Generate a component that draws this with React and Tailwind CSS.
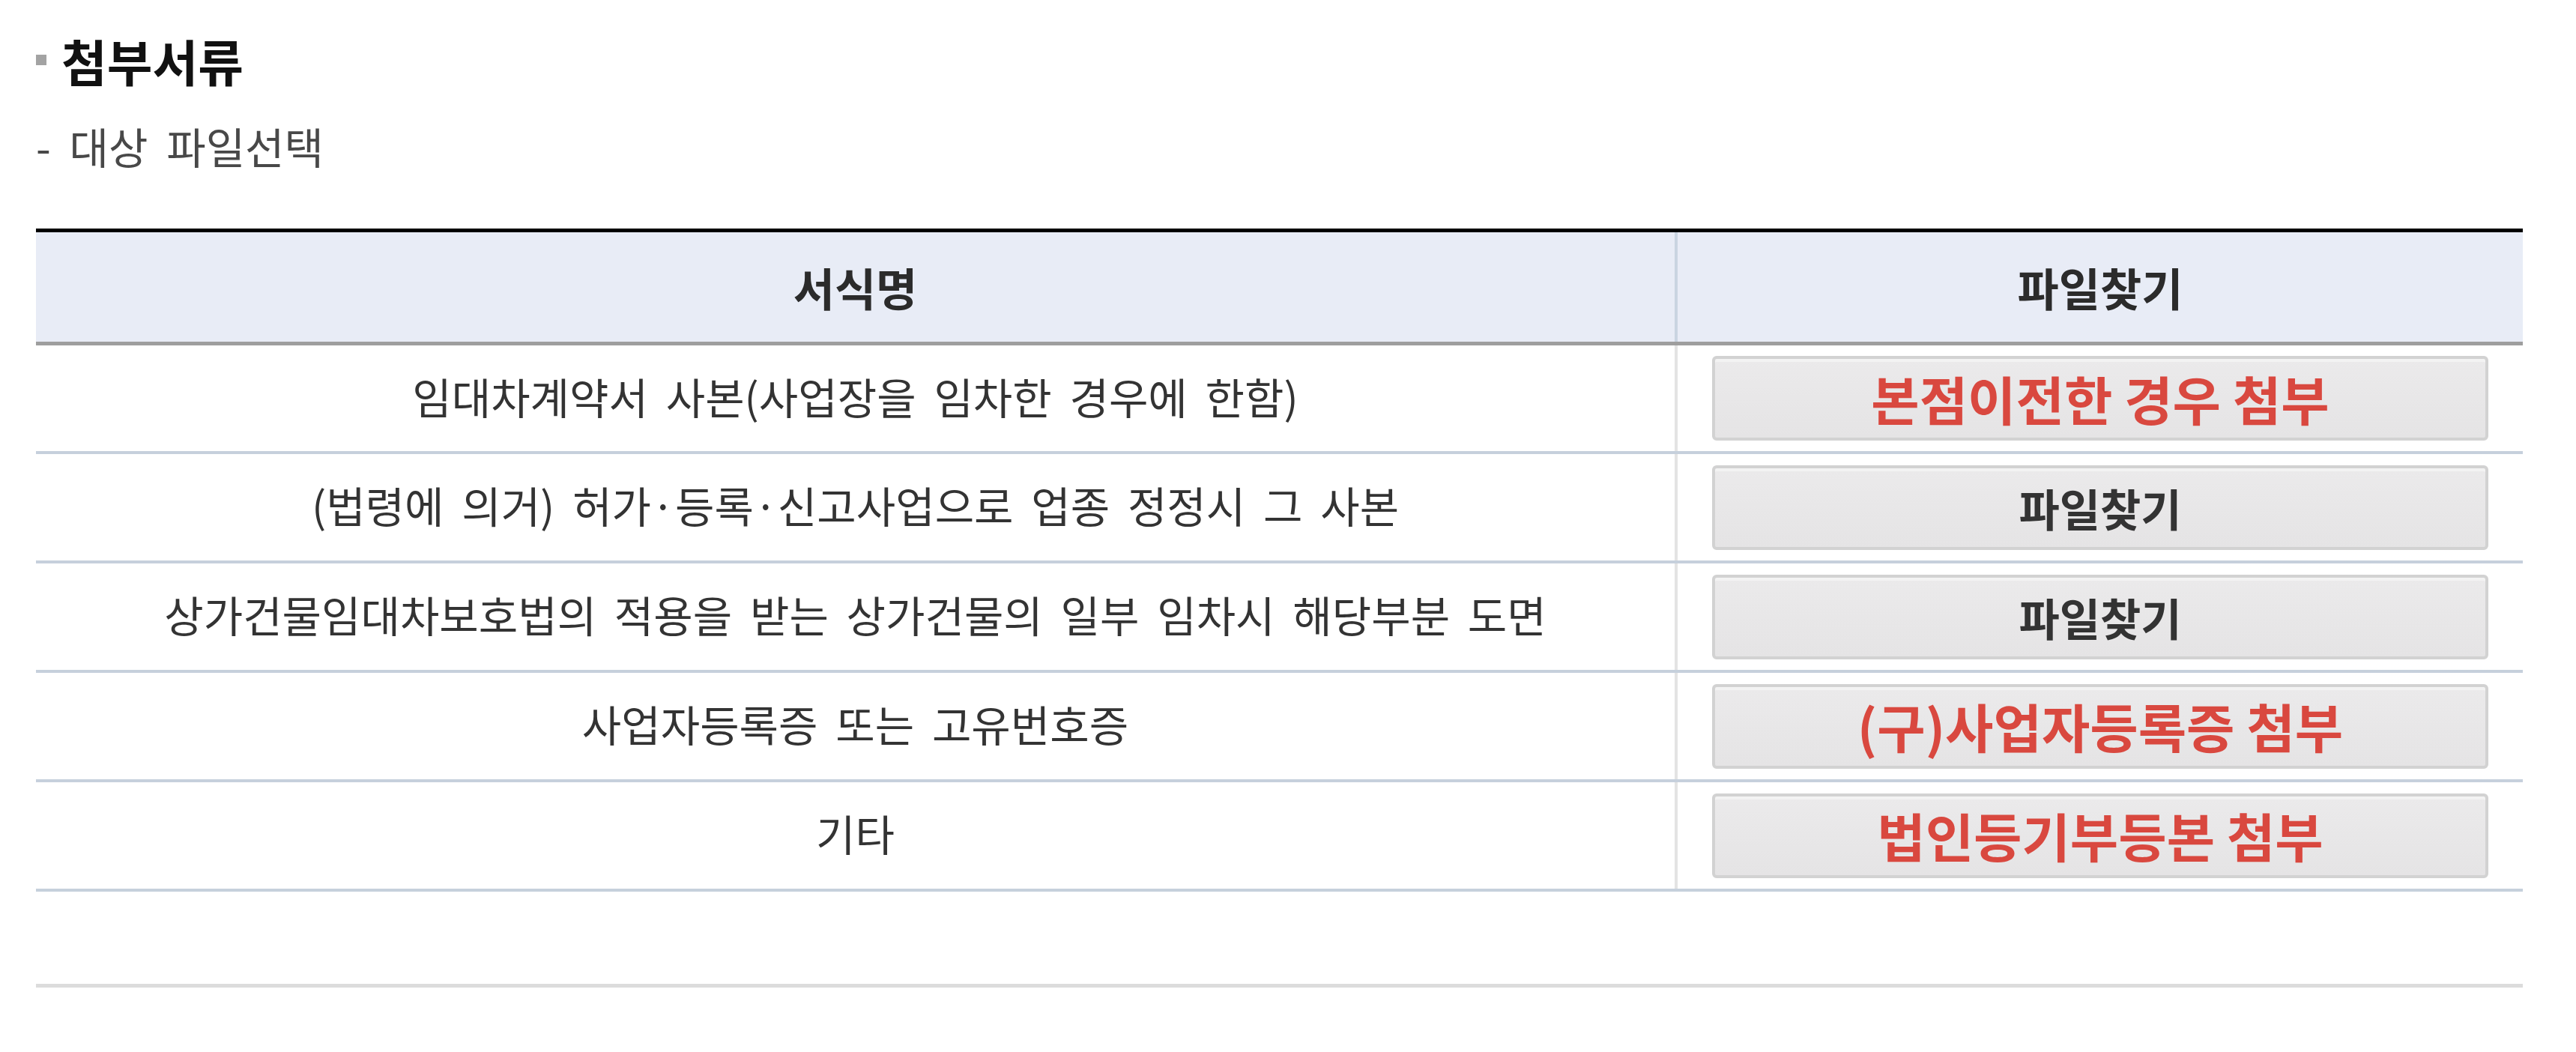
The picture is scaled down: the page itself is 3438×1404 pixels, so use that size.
import React from "react";

const rows = [
    { name: "임대차계약서 사본(사업장을 임차한 경우에 한함)", label: "본점이전한 경우 첨부", red: true },
    { name: "(법령에 의거) 허가·등록·신고사업으로 업종 정정시 그 사본", label: "파일찾기" },
    { name: "상가건물임대차보호법의 적용을 받는 상가건물의 일부 임차시 해당부분 도면", label: "파일찾기" },
    { name: "사업자등록증 또는 고유번호증", label: "(구)사업자등록증 첨부", red: true },
    { name: "기타", label: "법인등기부등본 첨부", red: true },
];

function FileButton({ label, red }) {
    return (
        <button
            type="button"
            className={
                red
                    ? "w-full h-[113px] flex items-center justify-center rounded-[6px] border-4 border-[#d2d2d2] bg-gradient-to-b from-[#ebeaeb] to-[#e5e4e5] shadow-[inset_0_4px_0_#f3f3f3] text-[70px] leading-none font-bold text-[#d9483f]"
                    : "w-full h-[113px] flex items-center justify-center rounded-[6px] border-4 border-[#d2d2d2] bg-gradient-to-b from-[#ebeaeb] to-[#e5e4e5] shadow-[inset_0_4px_0_#f3f3f3] text-[59px] leading-none font-bold text-[#333]"
            }
        >
            {label}
        </button>
    );
}

export default function App() {
    return (
        <div className="w-[3438px] min-h-[1404px] bg-white pl-[48px] pr-[71px] pt-[47px] [font-family:'Noto_Sans_CJK_KR','Noto_Sans',sans-serif]">
            {/* Section title */}
            <h2 className="flex items-center h-[66px] text-[66px] leading-[66px] font-bold text-[#111]">
                <span className="w-[14px] h-[14px] bg-[#a3a3a3] mr-[20px]" />
                첨부서류
            </h2>
            <p className="mt-[53px] h-[57px] text-[57px] leading-[57px] text-[#484848] [word-spacing:12px]">
                - 대상 파일선택
            </p>

            {/* Attachment table */}
            <div className="mt-[82px] border-t-[5px] border-black">
                <div className="flex h-[151px] bg-[#e8ecf6] border-b-[5px] border-[#9e9e9e] text-[60px] font-bold text-[#2b2b2b]">
                    <div className="w-[2187px] flex items-center justify-center">서식명</div>
                    <div className="flex-1 flex items-center justify-center border-l-4 border-[#c9d4e1]">파일찾기</div>
                </div>

                {rows.map((row, i) => (
                    <div
                        key={row.name}
                        className={
                            i === 0
                                ? "flex h-[145px] border-b-4 border-[#c6d0dc]"
                                : "flex h-[146px] border-b-4 border-[#c6d0dc]"
                        }
                    >
                        <div className="w-[2187px] flex items-center justify-center pb-[6px] text-[57px] text-[#333] [word-spacing:11px]">
                            {row.name}
                        </div>
                        <div className="flex-1 flex items-center px-[46px] border-l-4 border-[#e3e3e3]">
                            <FileButton label={row.label} red={row.red} />
                        </div>
                    </div>
                ))}

                <div className="h-[123px]" />
                <div className="border-t-[5px] border-[#dcdcdc]" />
            </div>
        </div>
    );
}
